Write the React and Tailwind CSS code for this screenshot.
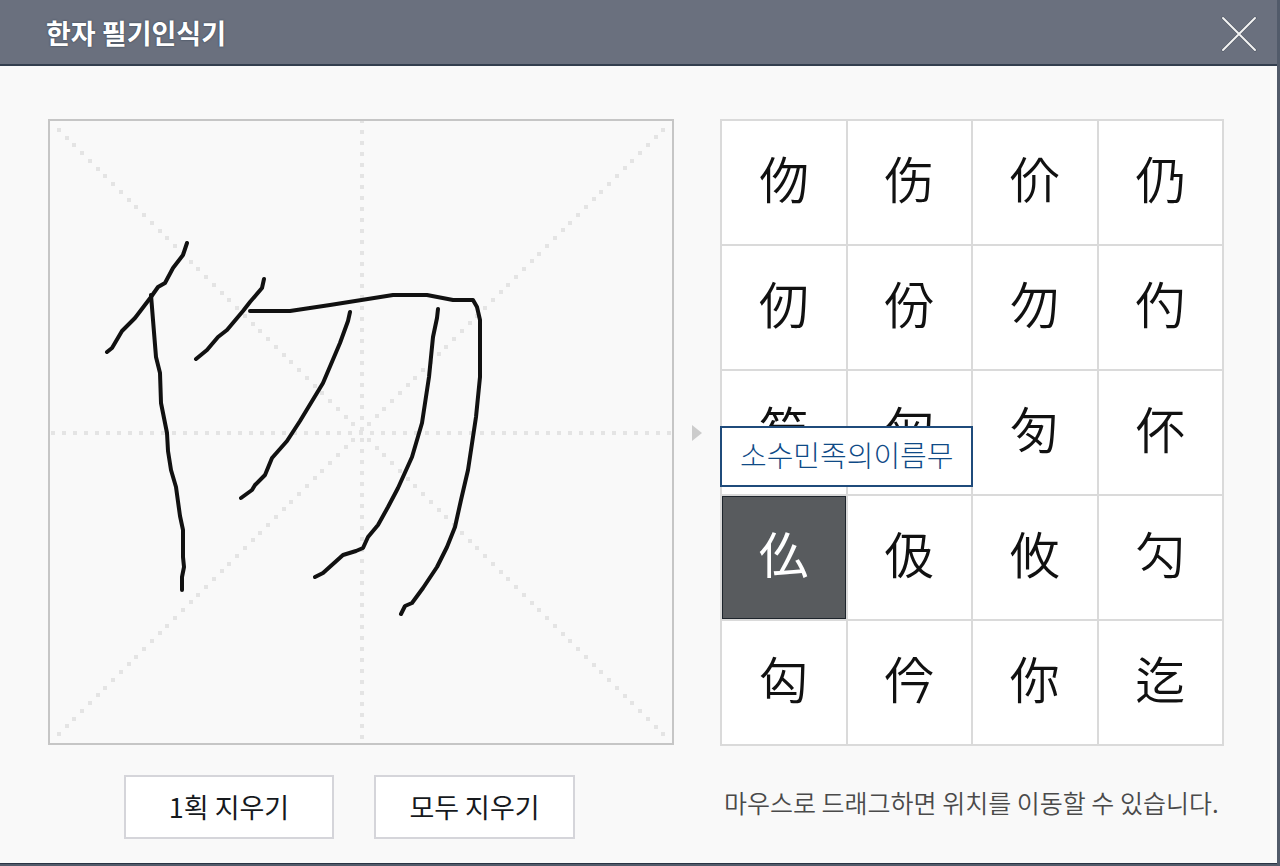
import React, { useState } from 'react';
import clsx from 'clsx';

const initialStrokes = [
  'M187 243 L183 255 L173 268 L165 283 L158 287 L151 297 L135 318 L122 331 L112 348 L107 352',
  'M151 295 L153 320 L156 357 L160 373 L161 403 L167 433 L168 451 L171 470 L176 487 L180 516 L183 530 L183 557 L184 567 L182 577 L182 590',
  'M264 279 L262 288 L250 302 L243 311 L227 330 L218 337 L207 350 L196 359',
  'M250 311 L290 311 L330 305 L393 295 L427 295 L453 300 L473 300 L477 307 L480 320 L480 377 L476 417 L468 470 L461 500 L455 527 L447 547 L437 567 L423 588 L412 603 L405 606 L401 614',
  'M350 312 L348 321 L340 343 L323 383 L300 421 L287 441 L272 458 L265 475 L255 485 L252 490 L241 498',
  'M438 309 L437 318 L433 337 L429 377 L422 423 L412 457 L398 488 L388 507 L378 525 L368 537 L363 548 L356 551 L343 555 L323 573 L315 577',
];

const candidates = [
  { char: '伆', hint: '떠날물' },
  { char: '伤', hint: '다칠상' },
  { char: '价', hint: '클개' },
  { char: '仍', hint: '인할잉' },
  { char: '仞', hint: '길인' },
  { char: '份', hint: '부분분' },
  { char: '勿', hint: '말물' },
  { char: '仢', hint: '외나무다리작' },
  { char: '笏', hint: '홀홀' },
  { char: '匊', hint: '움킬국' },
  { char: '匇', hint: '바쁠총' },
  { char: '伓', hint: '아닐부' },
  { char: '仫', hint: '소수민족의이름무' },
  { char: '伋', hint: '속일급' },
  { char: '攸', hint: '바유' },
  { char: '勽', hint: '안을포' },
  { char: '匃', hint: '빌개' },
  { char: '仱', hint: '오랑캐음악금' },
  { char: '你', hint: '너니' },
  { char: '迄', hint: '이를흘' },
];

// Dot positions of the guide lines, from the middle of the board outwards
const straightDots = Array.from({ length: 57 }, (_, i) => (i - 28) * 11);
const diagonalDots = Array.from({ length: 79 }, (_, i) => Math.round((i - 39) * 7.75));

const GuideLines = () => (
  <g fill="#e4e4e4">
    {straightDots.map(d => (
      <React.Fragment key={d}>
        <rect x="360" y={d + 427} width="4" height="4" />
        <rect x={d + 359} y="431" width="4" height="4" />
      </React.Fragment>
    ))}
    {diagonalDots.map(d => (
      <React.Fragment key={d}>
        <rect x={d + 359} y={d + 430} width="4" height="4" />
        <rect x={d + 359} y={430 - d} width="4" height="4" />
      </React.Fragment>
    ))}
  </g>
);

const DrawingBoard = ({ strokes }) => (
  <div className="aspect-square self-start border-2 border-[#c6c6c6]">
    <svg viewBox="50 121 622 622" className="block h-full w-full" role="img" aria-label="필기 영역">
      <GuideLines />
      <g fill="none" stroke="#111111" strokeWidth="4" strokeLinejoin="round" strokeLinecap="round">
        {strokes.map(d => (
          <path key={d} d={d} />
        ))}
      </g>
    </svg>
  </div>
);

const CandidateCell = ({ item, selected, onSelect }) => (
  <div className="relative">
    <button
      type="button"
      onClick={onSelect}
      className={clsx(
        'flex h-full w-full items-center justify-center pb-3 text-[50px] leading-none',
        selected ? 'border border-[#1e252c] bg-[#585b5e] font-normal text-white' : 'bg-white font-[350] text-[#111111]'
      )}
    >
      {item.char}
    </button>
    {selected && (
      <span className="absolute bottom-full -left-[2px] z-10 mb-[9px] border-2 border-[#1f4b7b] bg-white px-[18px] pt-[6px] pb-[10px] text-[29px] leading-[41px] font-light whitespace-nowrap text-[#0f4a86]">
        {item.hint}
      </span>
    )}
  </div>
);

const App = () => {
  const [strokes, setStrokes] = useState(initialStrokes);
  const [selected, setSelected] = useState('仫');
  const [open, setOpen] = useState(true);

  if (!open) return null;

  return (
    <div className="flex min-h-screen bg-[#525b6a] pr-[3px] pb-[3px] font-['Noto_Sans_CJK_KR',sans-serif]">
      <main className="flex-1 border-b border-[#2a3444] bg-[#f9f9f9]">
        <header className="flex h-[66px] items-center justify-between border-b-2 border-[#333e4e] bg-[#6a707e] pt-[2px] pr-5 pl-[46px]">
          <h1 className="text-[27px] leading-8 font-bold text-white text-shadow-[0_0_2px_#2b3b4b]">한자 필기인식기</h1>
          <button type="button" aria-label="닫기" onClick={() => setOpen(false)}>
            <svg viewBox="0 0 36 36" className="mt-[2px] block size-9" fill="none" strokeLinecap="round">
              <path d="M2 2L34 34M34 2L2 34" stroke="#49505e" strokeWidth="3" />
              <path d="M2 2L34 34M34 2L2 34" stroke="#f4f4f4" strokeWidth="2" />
            </svg>
          </button>
        </header>

        <div className="grid grid-cols-[626fr_46px_504fr] pt-[53px] pr-[53px] pl-12">
          <DrawingBoard strokes={strokes} />

          <svg viewBox="0 0 10 16" className="h-4 w-[10px] place-self-center" fill="#cccccc">
            <path d="M0 0L10 8L0 16Z" />
          </svg>

          {/* Recognised characters */}
          <div className="grid aspect-[504/627] grid-cols-4 grid-rows-5 gap-[2px] bg-[#dadada] p-[2px]">
            {candidates.map(item => (
              <CandidateCell
                key={item.char}
                item={item}
                selected={item.char === selected}
                onSelect={() => setSelected(item.char)}
              />
            ))}
          </div>

          <div className="flex gap-10 pt-[29px] pb-6 pl-[76px] text-[27px] text-[#16191d]">
            <button
              type="button"
              onClick={() => setStrokes(strokes.slice(0, -1))}
              className="h-16 w-[210px] border-2 border-[#d5d5da] bg-white"
            >
              1획 지우기
            </button>
            <button
              type="button"
              onClick={() => setStrokes([])}
              className="h-16 w-[201px] border-2 border-[#d5d5da] bg-white"
            >
              모두 지우기
            </button>
          </div>

          <p className="col-start-3 pt-[38px] pl-1 text-[25px] leading-9 font-[350] whitespace-nowrap text-[#4a4a4a]">
            마우스로 드래그하면 위치를 이동할 수 있습니다.
          </p>
        </div>
      </main>
    </div>
  );
};

export default App;
